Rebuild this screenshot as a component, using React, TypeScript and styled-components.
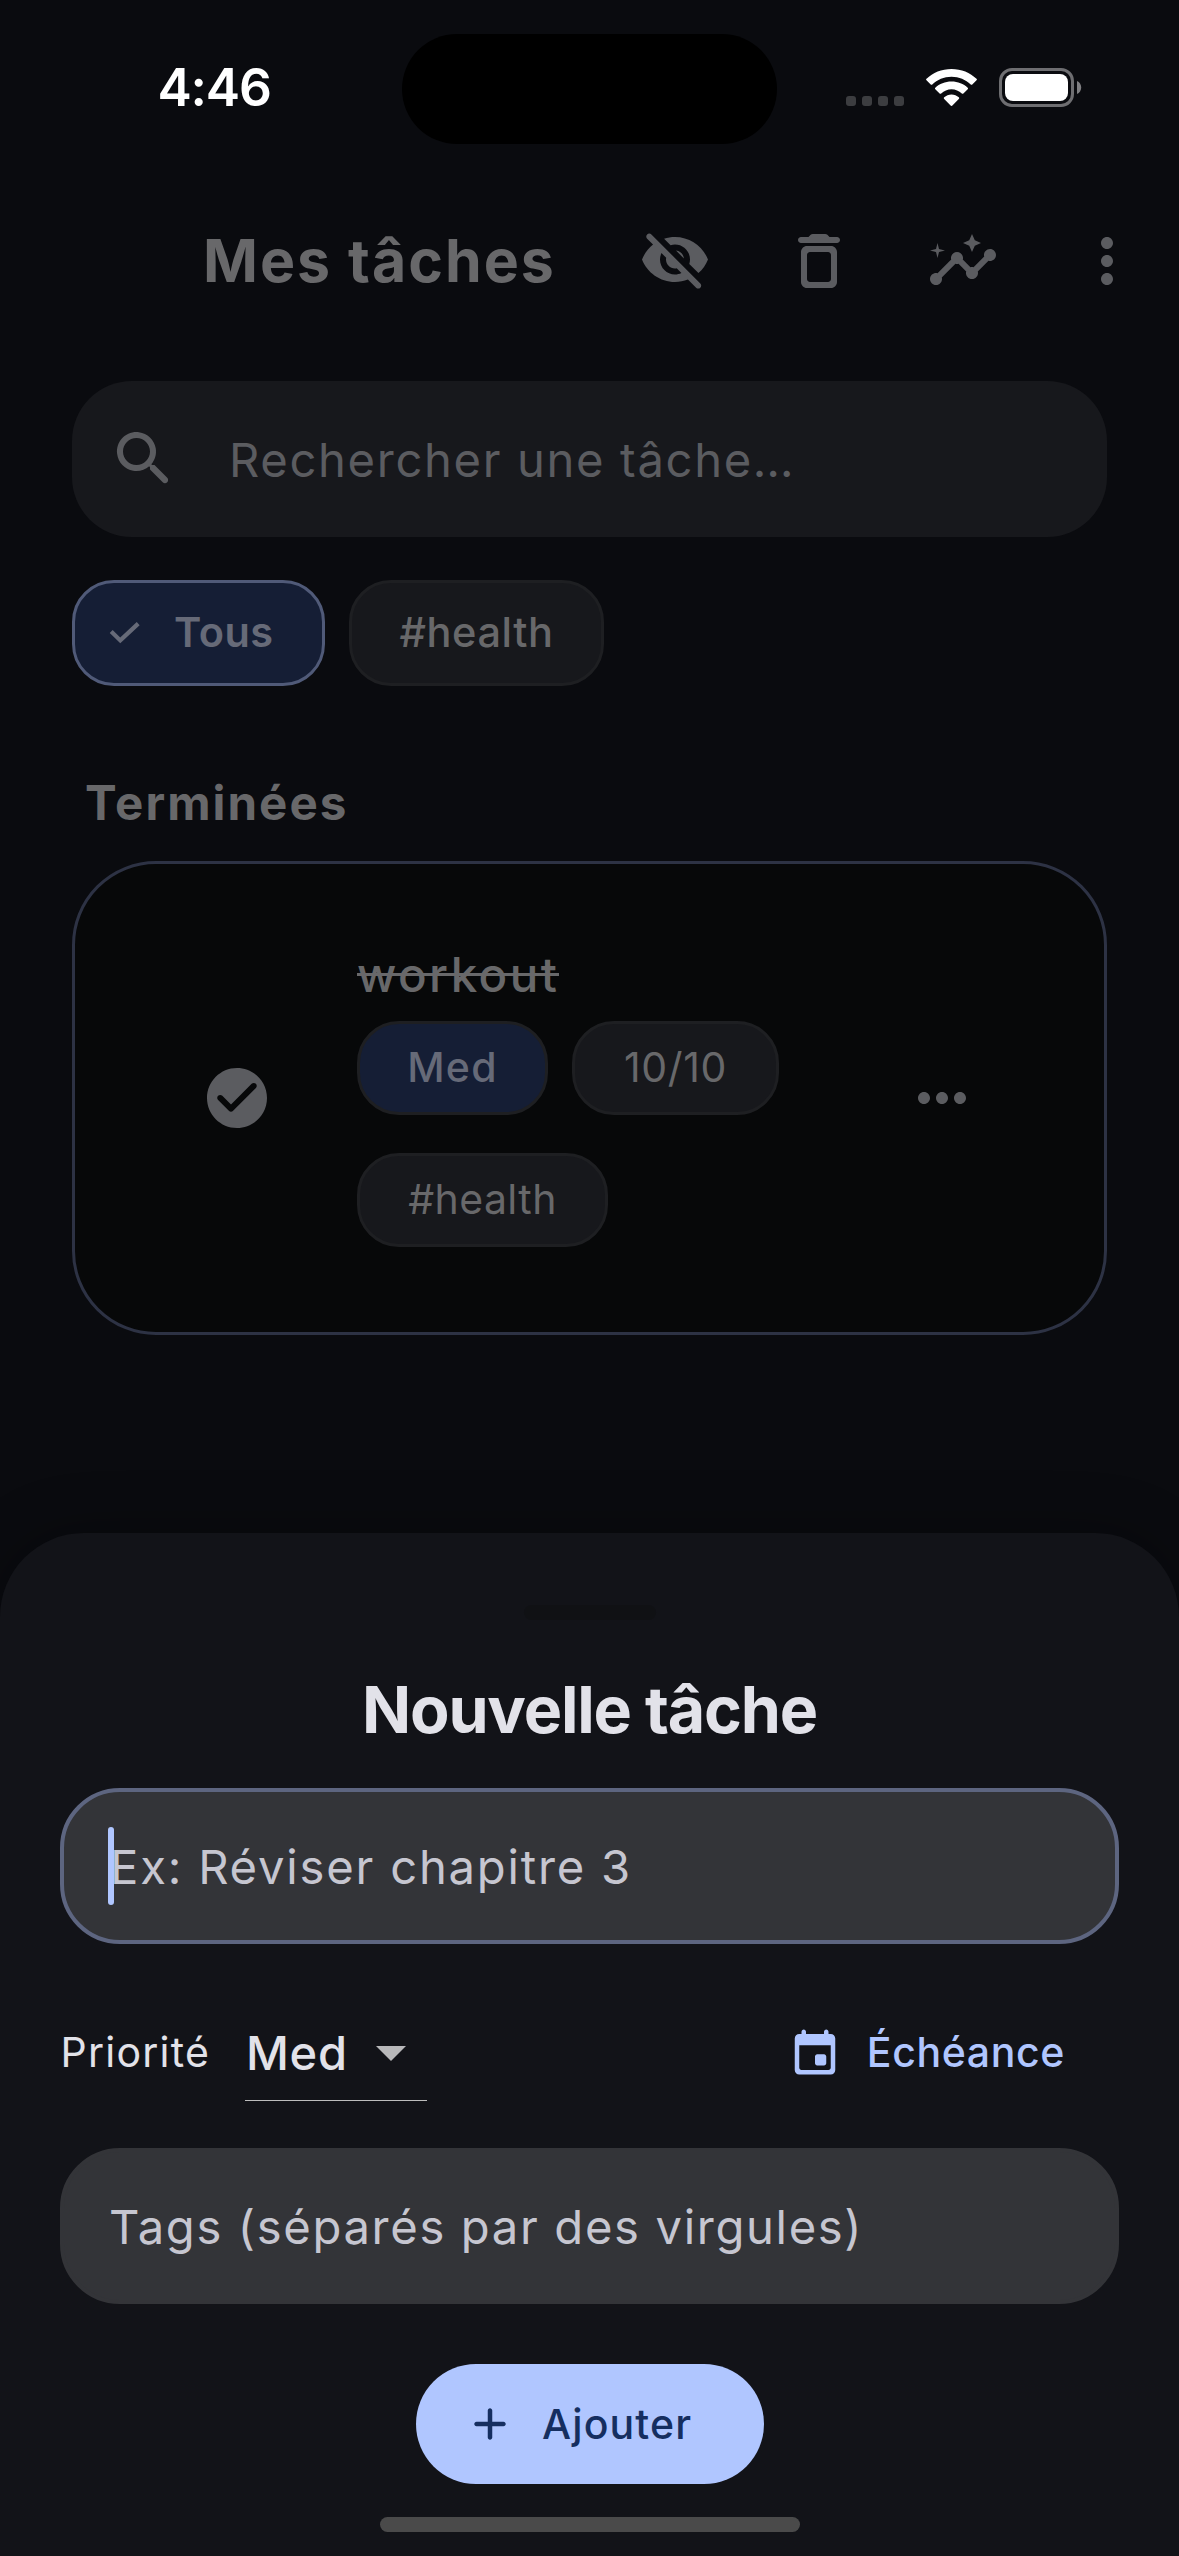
import React from "react";
import styled, { createGlobalStyle } from "styled-components";

const GlobalStyle = createGlobalStyle`
  *, *::before, *::after { box-sizing: border-box; }
  html, body { margin: 0; padding: 0; background: #0a0b0f; }
  body { font-family: Inter, "Liberation Sans", sans-serif; -webkit-font-smoothing: antialiased; }
`;

const Screen = styled.main`
  position: relative;
  display: flex;
  flex-direction: column;
  width: 1179px;
  height: 2556px;
  overflow: hidden;
  background: #0a0b0f;
`;

const Text = styled.span<{ $size: number; $weight?: number; $track?: number; $drop?: number; $color: string }>`
  flex: none;
  display: block;
  padding-top: ${(p) => p.$drop ?? 0}px;
  white-space: nowrap;
  line-height: 1.2;
  font-size: ${(p) => p.$size}px;
  font-weight: ${(p) => p.$weight ?? 400};
  letter-spacing: ${(p) => p.$track ?? 0}px;
  color: ${(p) => p.$color};
`;

const StatusBar = styled.header`
  flex: none;
  display: grid;
  grid-template-columns: 402px 375px 402px;
  align-items: center;
  height: 177px;
  padding-bottom: 2px;
`;

const Clock = styled.div`
  padding-left: 157.5px;
`;

const Island = styled.div`
  height: 110px;
  margin-top: 3px;
  border-radius: 55px;
  background: #000;
`;

const StatusIcons = styled.div`
  display: flex;
  align-items: center;
  height: 37px;
  padding-left: 69px;
`;

const SignalDots = styled.div`
  display: flex;
  align-self: flex-end;
  gap: 6px;
  margin-right: 22px;
`;

const Dot = styled.i`
  width: 10px;
  height: 10px;
  border-radius: 3px;
  background: #3c3d40;
`;

const Glyph = styled.svg<{ $w: number; $h?: number; $color: string }>`
  flex: none;
  display: block;
  width: ${(p) => p.$w}px;
  height: ${(p) => p.$h ?? p.$w}px;
  fill: ${(p) => p.$color};
`;

const BatteryGlyph = styled(Glyph)`
  margin-left: 22px;
`;

const AppBar = styled.div`
  flex: none;
  display: flex;
  align-items: center;
  justify-content: space-between;
  height: 168px;
  padding: 0 36px 0 203px;
`;

const Actions = styled.nav`
  display: flex;
  gap: 72px;
`;

const Content = styled.section`
  display: flex;
  flex-direction: column;
  padding: 36px 72px 0;
`;

const SearchField = styled.div`
  display: flex;
  align-items: center;
  gap: 49px;
  height: 156px;
  padding-left: 36px;
  border-radius: 60px;
  background: #17181c;
`;

const Filters = styled.div`
  display: flex;
  gap: 24px;
  margin-top: 43px;
`;

const Chip = styled.div<{ $w: number; $h: number; $bg?: string; $border?: string }>`
  display: flex;
  align-items: center;
  justify-content: center;
  width: ${(p) => p.$w}px;
  height: ${(p) => p.$h}px;
  border: 3px solid ${(p) => p.$border ?? "#1e1f22"};
  border-radius: 42px;
  background: ${(p) => p.$bg ?? "#17181c"};
`;

const SelectedChip = styled(Chip)`
  justify-content: flex-start;
  gap: 33px;
  padding-left: 34px;
`;

const SectionTitle = styled.div`
  margin: 87px 0 0 13px;
  height: 58px;
  display: flex;
  align-items: center;
`;

const TaskCard = styled.article`
  display: flex;
  align-items: center;
  height: 474px;
  margin-top: 30px;
  padding: 0 126px;
  border: 3px solid #2d3244;
  border-radius: 84px;
  background: #070809;
`;

const TaskBody = styled.div`
  flex: 1;
  display: flex;
  flex-direction: column;
  margin-left: 84px;
`;

const TaskTitle = styled.div`
  position: relative;
  display: flex;
  align-items: center;
  align-self: flex-start;
  height: 48px;
  margin-bottom: 24px;

  &::after {
    content: "";
    position: absolute;
    left: 0;
    right: 0;
    top: 24px;
    height: 3px;
    background: #68686a;
  }
`;

const Tags = styled.div`
  display: flex;
  flex-wrap: wrap;
  gap: 38px 24px;
`;

const Sheet = styled.section`
  position: absolute;
  inset: auto 0 0 0;
  display: flex;
  flex-direction: column;
  height: 1023px;
  padding: 72px 60px 0;
  border-radius: 84px 84px 0 0;
  background: #121318;
  box-shadow: 0 0 60px rgba(0, 0, 0, 0.3);
`;

const Handle = styled.div`
  flex: none;
  align-self: center;
  width: 132px;
  height: 15px;
  border-radius: 8px;
  background: #101114;
`;

const SheetTitle = styled.div`
  display: flex;
  align-items: center;
  justify-content: center;
  height: 80px;
  margin: 51px 0 37px;
`;

const Field = styled.div<{ $focused?: boolean }>`
  position: relative;
  flex: none;
  display: flex;
  align-items: center;
  height: 156px;
  padding-left: ${(p) => (p.$focused ? 46 : 45)}px;
  border: 4px solid ${(p) => (p.$focused ? "#5d6580" : "#333438")};
  border-radius: 60px;
  background: #333438;
`;

const Caret = styled.i`
  position: absolute;
  left: 44px;
  top: 35px;
  width: 6px;
  height: 78px;
  border-radius: 3px;
  background: #b0c6ff;
`;

const OptionsRow = styled.div`
  flex: none;
  display: flex;
  align-items: center;
  height: 96px;
  margin: 60px 0 48px;
`;

const Priority = styled.div`
  width: 185px;
  padding-left: 0.5px;
`;

const Select = styled.div`
  display: flex;
  align-items: center;
  justify-content: space-between;
  width: 182px;
  height: 96px;
  padding-left: 1px;
  box-shadow: 0 1px 0 #bdbdbd;
`;

const DueButton = styled.div`
  display: flex;
  align-items: center;
  gap: 25px;
  margin-left: auto;
  padding-right: 54px;
`;

const AddButton = styled.div`
  flex: none;
  align-self: center;
  display: flex;
  align-items: center;
  gap: 25px;
  width: 348px;
  height: 120px;
  margin-top: 60px;
  padding-left: 47.500px;
  border-radius: 60px;
  background: #b0c6ff;
`;

const HomeIndicator = styled.div`
  flex: none;
  align-self: center;
  width: 420px;
  height: 15px;
  margin-top: 33px;
  border-radius: 8px;
  background: #4a4a4a;
`;

const MUTED = "#5b5c60";
const DIM = "#68686a";
const BRIGHT = "#e2e2e9";
const HINT = "#c6c6d0";

const paths = {
  hidden:
    "M12 6.5c2.76 0 5 2.24 5 5 0 .51-.1 1-.24 1.46l3.06 3.06c1.39-1.23 2.49-2.77 3.18-4.53C21.27 7.11 17 4 12 4c-1.27 0-2.49.2-3.64.57l2.17 2.17c.47-.14.96-.24 1.47-.24zM2.71 3.16c-.39.39-.39 1.02 0 1.41l1.97 1.97C3.06 7.83 1.77 9.53 1 11.5 2.73 15.89 7 19 12 19c1.52 0 2.97-.3 4.31-.82l2.72 2.72c.39.39 1.02.39 1.41 0 .39-.39.39-1.02 0-1.41L4.13 3.16c-.39-.39-1.03-.39-1.42 0zM12 16.5c-2.76 0-5-2.24-5-5 0-.77.18-1.5.49-2.14l1.57 1.57c-.03.18-.06.37-.06.57 0 1.66 1.34 3 3 3 .2 0 .38-.03.57-.07L14.14 16c-.65.32-1.37.5-2.14.5zm2.97-5.33c-.15-1.4-1.25-2.49-2.64-2.64l2.64 2.64z",
  trash:
    "M6 19c0 1.1.9 2 2 2h8c1.1 0 2-.9 2-2V9c0-1.1-.9-2-2-2H8c-1.1 0-2 .9-2 2v10zM9 9h6c.55 0 1 .45 1 1v8c0 .55-.45 1-1 1H9c-.55 0-1-.45-1-1v-8c0-.55.45-1 1-1zm6.5-5l-.71-.71c-.18-.18-.44-.29-.7-.29H9.91c-.26 0-.52.11-.7.29L8.5 4H6c-.55 0-1 .45-1 1s.45 1 1 1h12c.55 0 1-.45 1-1s-.45-1-1-1h-2.5z",
  insights:
    "M21 8c-1.45 0-2.26 1.44-1.93 2.51l-3.55 3.56c-.3-.09-.74-.09-1.04 0l-2.55-2.55C12.27 10.45 11.46 9 10 9c-1.45 0-2.27 1.44-1.93 2.52l-4.56 4.55C2.44 15.74 1 16.55 1 18c0 1.1.9 2 2 2 1.45 0 2.26-1.44 1.93-2.51l4.55-4.56c.3.09.74.09 1.04 0l2.55 2.55C12.73 16.55 13.54 18 15 18c1.45 0 2.27-1.44 1.93-2.52l3.56-3.55C21.56 12.26 23 11.45 23 10c0-1.1-.9-2-2-2z M15 9l.94-2.07L18 6l-2.06-.93L15 3l-.92 2.07L12 6l2.08.93z M3.5 11L4 9l2-.5L4 8l-.5-2L3 8l-2 .5L3 9z",
  moreVert:
    "M12 8c1.1 0 2-.9 2-2s-.9-2-2-2-2 .9-2 2 .9 2 2 2zm0 2c-1.1 0-2 .9-2 2s.9 2 2 2 2-.9 2-2-.9-2-2-2zm0 6c-1.1 0-2 .9-2 2s.9 2 2 2 2-.9 2-2-.9-2-2-2z",
  moreHoriz:
    "M6 10c-1.1 0-2 .9-2 2s.9 2 2 2 2-.9 2-2-.9-2-2-2zm12 0c-1.1 0-2 .9-2 2s.9 2 2 2 2-.9 2-2-.9-2-2-2zm-6 0c-1.1 0-2 .9-2 2s.9 2 2 2 2-.9 2-2-.9-2-2-2z",
  search:
    "M15.5 14h-.79l-.28-.27c1.2-1.4 1.82-3.31 1.48-5.34-.47-2.78-2.79-5-5.59-5.34-4.23-.52-7.79 3.04-7.27 7.27.34 2.8 2.56 5.12 5.34 5.59 2.03.34 3.94-.28 5.34-1.48l.27.28v.79l4.25 4.25c.41.41 1.08.41 1.49 0 .41-.41.41-1.08 0-1.49L15.5 14zm-6 0C7.01 14 5 11.99 5 9.5S7.01 5 9.5 5 14 7.01 14 9.5 11.99 14 9.5 14z",
  checkCircle:
    "M12 2C6.48 2 2 6.48 2 12s4.48 10 10 10 10-4.48 10-10S17.52 2 12 2zM9.29 16.29L5.7 12.7c-.39-.39-.39-1.02 0-1.41.39-.39 1.02-.39 1.41 0L10 14.17l6.88-6.88c.39-.39 1.02-.39 1.41 0 .39.39.39 1.02 0 1.41l-7.59 7.59c-.38.39-1.02.39-1.41 0z",
  dropDown: "M7 10l5 5 5-5z",
  event:
    "M16 13h-3c-.55 0-1 .45-1 1v3c0 .55.45 1 1 1h3c.55 0 1-.45 1-1v-3c0-.55-.45-1-1-1zm0-10v1H8V3c0-.55-.45-1-1-1s-1 .45-1 1v1H5c-1.11 0-1.99.9-1.99 2L3 20c0 1.1.89 2 2 2h14c1.1 0 2-.9 2-2V6c0-1.1-.9-2-2-2h-1V3c0-.55-.45-1-1-1s-1 .45-1 1zm2 17H6c-.55 0-1-.45-1-1V9h14v10c0 .55-.45 1-1 1z",
  add: "M18 13h-5v5c0 .55-.45 1-1 1s-1-.45-1-1v-5H6c-.55 0-1-.45-1-1s.45-1 1-1h5V6c0-.55.45-1 1-1s1 .45 1 1v5h5c.55 0 1 .45 1 1s-.45 1-1 1z",
};

function Icon({ name, size = 72, color = MUTED }: { name: keyof typeof paths; size?: number; color?: string }) {
  return (
    <Glyph viewBox="0 0 24 24" $w={size} $color={color}>
      <path d={paths[name]} />
    </Glyph>
  );
}

function Wifi() {
  return (
    <Glyph viewBox="0 0 51 37" $w={51} $h={37} $color="#fff">
      <path d="M25.5 0C35.3 0 44.2 3.7 50.5 9.8a.9.9 0 0 1 0 1.4L46.300 15.500a1.200 1.200 0 0 1-1.600 0C39.700 10.700 33.100 7.700 25.500 7.700S11.300 10.700 6.300 15.500a1.200 1.200 0 0 1-1.600 0L.5 11.200a.9.9 0 0 1 0-1.400C6.800 3.700 15.700 0 25.500 0z" />
      <path d="M25.500 12.600c6.400 0 12 2.300 16.200 6.200a.9.9 0 0 1 0 1.400l-4.300 4.300a1.200 1.200 0 0 1-1.600 0c-2.800-2.600-6.300-4.200-10.300-4.200s-7.500 1.600-10.300 4.200a1.200 1.200 0 0 1-1.600 0l-4.300-4.300a.9.9 0 0 1 0-1.400c4.200-3.900 9.800-6.200 16.200-6.200z" />
      <path d="M25.500 25.400c2.800 0 5.300 1.100 7.300 2.900a1.100 1.100 0 0 1 0 1.600l-6.400 6.600a1.200 1.200 0 0 1-1.800 0l-6.400-6.600a1.100 1.100 0 0 1 0-1.600c2-1.800 4.500-2.900 7.300-2.900z" />
    </Glyph>
  );
}

function Battery() {
  return (
    <BatteryGlyph viewBox="0 0 83 39" $w={83} $h={39} $color="#fff">
      <rect x="1.5" y="1.5" width="72" height="36" rx="11.5" fill="none" stroke="#6e6e71" strokeWidth="3" />
      <rect x="6" y="6" width="63" height="27" rx="8" />
      <path d="M78 13c2.600 1 4.200 3.600 4.200 6.500S80.600 25 78 26z" fill="#7f7f82" />
    </BatteryGlyph>
  );
}

export default function App() {
  return (
    <Screen>
      <GlobalStyle />
      <StatusBar>
        <Clock>
          <Text $size={51.5} $weight={600} $track={-1.2} $color="#fff">4:46</Text>
        </Clock>
        <Island />
        <StatusIcons>
          <SignalDots>
            <Dot /><Dot /><Dot /><Dot />
          </SignalDots>
          <Wifi />
          <Battery />
        </StatusIcons>
      </StatusBar>

      <AppBar>
        <Text $size={59} $weight={700} $track={1.99} $drop={1} $color={DIM}>Mes tâches</Text>
        <Actions>
          <Icon name="hidden" />
          <Icon name="trash" />
          <Icon name="insights" />
          <Icon name="moreVert" />
        </Actions>
      </AppBar>

      <Content>
        <SearchField>
          <Icon name="search" />
          <Text $size={47.2} $track={1.64} $drop={3} $color={MUTED}>Rechercher une tâche…</Text>
        </SearchField>

        <Filters>
          <SelectedChip $w={253} $h={106} $bg="#151e35" $border="#505a78">
            <Glyph viewBox="0 0 32 24" $w={32} $h={24} $color="none">
              <polyline points="2.2,10.6 11.3,19.4 29.2,2.6" stroke="#666a78" strokeWidth="4.2" />
            </Glyph>
            <Text $size={41.5} $weight={600} $track={0.5} $color="#666a78">Tous</Text>
          </SelectedChip>
          <Chip $w={255} $h={106}>
            <Text $size={41.5} $weight={500} $track={0.6} $color={DIM}>#health</Text>
          </Chip>
        </Filters>

        <SectionTitle>
          <Text $size={47.5} $weight={700} $track={2.05} $drop={1} $color={DIM}>Terminées</Text>
        </SectionTitle>

        <TaskCard>
          <Icon name="checkCircle" />
          <TaskBody>
            <TaskTitle>
              <Text $size={47.5} $weight={500} $track={2.42} $drop={2} $color={DIM}>workout</Text>
            </TaskTitle>
            <Tags>
              <Chip $w={191} $h={94} $bg="#151e35">
                <Text $size={41} $weight={500} $track={1.25} $color="#666a78">Med</Text>
              </Chip>
              <Chip $w={207} $h={94}>
                <Text $size={41} $track={0.6} $color={DIM}>10/10</Text>
              </Chip>
              <Chip $w={251} $h={94}>
                <Text $size={41} $track={0.42} $color={DIM}>#health</Text>
              </Chip>
            </Tags>
          </TaskBody>
          <Icon name="moreHoriz" />
        </TaskCard>
      </Content>

      <Sheet>
        <Handle />
        <SheetTitle>
          <Text $size={64.5} $weight={700} $track={-1.17} $color={BRIGHT}>Nouvelle tâche</Text>
        </SheetTitle>
        <Field $focused>
          <Text $size={47.2} $track={1.79} $drop={3} $color={HINT}>Ex: Réviser chapitre 3</Text>
          <Caret />
        </Field>
        <OptionsRow>
          <Priority>
            <Text $size={41} $track={1.24} $drop={2} $color={BRIGHT}>Priorité</Text>
          </Priority>
          <Select>
            <Text $size={47} $weight={500} $track={0.7} $drop={3} $color={BRIGHT}>Med</Text>
            <Icon name="dropDown" color="#b8b8ba" />
          </Select>
          <DueButton>
            <Icon name="event" size={54} color="#b0c6ff" />
            <Text $size={41} $weight={500} $track={0.62} $drop={2} $color="#b0c6ff">Échéance</Text>
          </DueButton>
        </OptionsRow>
        <Field>
          <Text $size={47.2} $track={1.65} $drop={3} $color={HINT}>Tags (séparés par des virgules)</Text>
        </Field>
        <AddButton>
          <Icon name="add" size={54} color="#152e60" />
          <Text $size={41} $weight={500} $track={1.12} $drop={2} $color="#152e60">Ajouter</Text>
        </AddButton>
        <HomeIndicator />
      </Sheet>
    </Screen>
  );
}
